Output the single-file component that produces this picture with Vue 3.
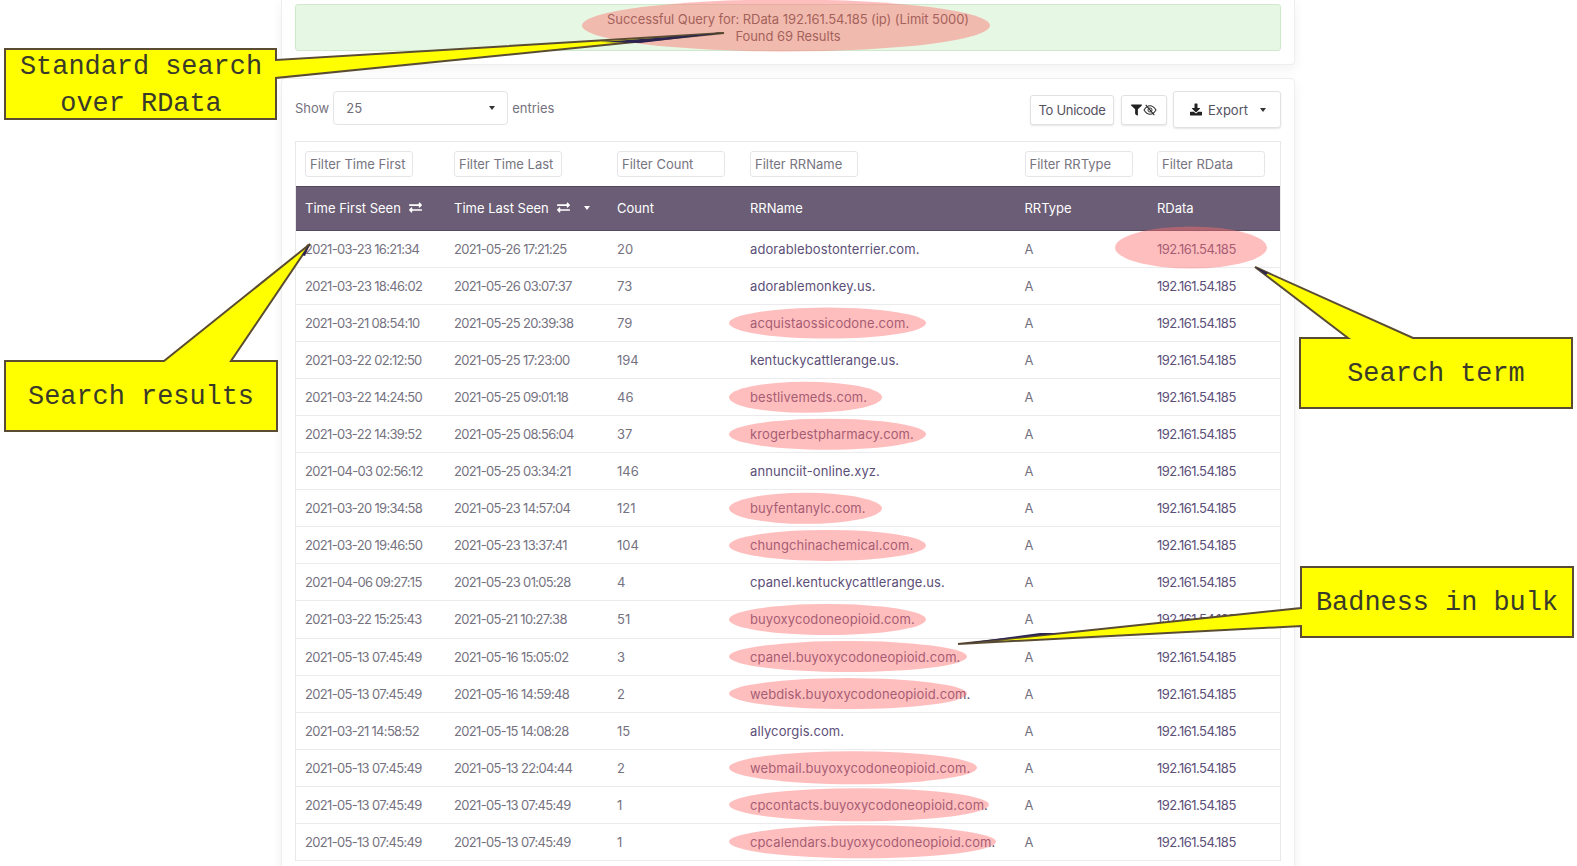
<script setup>
const rowsRaw = [
  ['2021-03-23 16:21:34','2021-05-26 17:21:25','20','adorablebostonterrier.com.'],
  ['2021-03-23 18:46:02','2021-05-26 03:07:37','73','adorablemonkey.us.'],
  ['2021-03-21 08:54:10','2021-05-25 20:39:38','79','acquistaossicodone.com.'],
  ['2021-03-22 02:12:50','2021-05-25 17:23:00','194','kentuckycattlerange.us.'],
  ['2021-03-22 14:24:50','2021-05-25 09:01:18','46','bestlivemeds.com.'],
  ['2021-03-22 14:39:52','2021-05-25 08:56:04','37','krogerbestpharmacy.com.'],
  ['2021-04-03 02:56:12','2021-05-25 03:34:21','146','annunciit-online.xyz.'],
  ['2021-03-20 19:34:58','2021-05-23 14:57:04','121','buyfentanylc.com.'],
  ['2021-03-20 19:46:50','2021-05-23 13:37:41','104','chungchinachemical.com.'],
  ['2021-04-06 09:27:15','2021-05-23 01:05:28','4','cpanel.kentuckycattlerange.us.'],
  ['2021-03-22 15:25:43','2021-05-21 10:27:38','51','buyoxycodoneopioid.com.'],
  ['2021-05-13 07:45:49','2021-05-16 15:05:02','3','cpanel.buyoxycodoneopioid.com.'],
  ['2021-05-13 07:45:49','2021-05-16 14:59:48','2','webdisk.buyoxycodoneopioid.com.'],
  ['2021-03-21 14:58:52','2021-05-15 14:08:28','15','allycorgis.com.'],
  ['2021-05-13 07:45:49','2021-05-13 22:04:44','2','webmail.buyoxycodoneopioid.com.'],
  ['2021-05-13 07:45:49','2021-05-13 07:45:49','1','cpcontacts.buyoxycodoneopioid.com.'],
  ['2021-05-13 07:45:49','2021-05-13 07:45:49','1','cpcalendars.buyoxycodoneopioid.com.']
]
const rows = rowsRaw.map((r, i) => ({ id: i, first: r[0], last: r[1], count: r[2], name: r[3], type: 'A', data: '192.161.54.185' }))

const filters = ['Filter Time First', 'Filter Time Last', 'Filter Count', 'Filter RRName', 'Filter RRType', 'Filter RData']

const marks = [
  { row: 2, x2: 926 }, { row: 4, x2: 882 }, { row: 5, x2: 926 }, { row: 7, x2: 882 },
  { row: 8, x2: 926 }, { row: 10, x2: 926 }, { row: 11, x2: 967 }, { row: 12, x2: 967 },
  { row: 14, x2: 977 }, { row: 15, x2: 989 }, { row: 16, x2: 996 }
].map(m => ({ cx: (729 + m.x2) / 2, rx: (m.x2 - 729) / 2, cy: 249 + 37.05 * m.row, ry: m.row > 13 ? 16.5 : 15.5 }))

const callouts = [
  '5,49 276,49 276,60 724,33 276,78 276,119 5,119',
  '5,361 164,361 310,244 231,361 277,361 277,431 5,431',
  '1300,338 1348,338 1255,267 1413,338 1572,338 1572,408 1300,408',
  '1301,567 1573,567 1573,637 1301,637 1301,626 958,644 1301,608'
]

const exchange = 'M0 168v-16c0-13.255 10.745-24 24-24h360V80c0-21.367 25.899-32.042 40.971-16.971l80 80c9.372 9.373 9.372 24.569 0 33.941l-80 80C409.956 271.982 384 261.456 384 240v-48H24c-13.255 0-24-10.745-24-24zm488 152H128v-48c0-21.314-25.862-32.08-40.971-16.971l-80 80c-9.372 9.373-9.372 24.569 0 33.941l80 80C102.057 463.997 128 453.437 128 432v-48h360c13.255 0 24-10.745 24-24v-16c0-13.255-10.745-24-24-24z'
</script>

<template>
  <div class="page">
    <main class="column">
      <section class="card card-top">
        <div class="alert">
          <div>Successful Query for: RData 192.161.54.185 (ip) (Limit 5000)</div>
          <div>Found 69 Results</div>
        </div>
      </section>

      <section class="card card-main">
        <div class="toolbar">
          <div class="length">
            <span>Show</span>
            <div class="select"><span>25</span><i class="caret dark"></i></div>
            <span>entries</span>
          </div>
          <div class="actions">
            <button class="btn unicode">To Unicode</button>
            <button class="btn toggle">
              <svg class="ic-filter" viewBox="0 0 512 512"><path d="M487.976 0H24.028C2.71 0-8.047 25.866 7.058 40.971L192 225.941V432c0 7.831 3.821 15.17 10.237 19.662l80 55.98C298.02 518.69 320 507.493 320 487.98V225.941l184.947-184.97C520.021 25.896 509.338 0 487.976 0z"/></svg>
              <svg class="ic-eye" viewBox="0 0 16 14"><path d="M1 7 C3.5 3 5.5 2 8 2 C10.5 2 12.5 3 15 7 C12.5 11 10.5 12 8 12 C5.5 12 3.5 11 1 7Z" fill="none" stroke="#2b2b2b" stroke-width="1.2"/><circle cx="8" cy="7" r="2.4" fill="none" stroke="#2b2b2b" stroke-width="1.1"/><path d="M3 1 L13 13" stroke="#2b2b2b" stroke-width="1.3"/></svg>
            </button>
            <button class="btn export">
              <svg class="ic-down" viewBox="0 0 512 512"><path d="M216 0h80c13.3 0 24 10.7 24 24v168h87.7c17.8 0 26.7 21.5 14.1 34.1L269.7 378.3c-7.5 7.5-19.8 7.5-27.3 0L90.1 226.1c-12.6-12.6-3.7-34.1 14.1-34.1H192V24c0-13.3 10.7-24 24-24zm296 376v112c0 13.3-10.7 24-24 24H24c-13.3 0-24-10.7-24-24V376c0-13.3 10.7-24 24-24h146.7l49 49c20.1 20.1 52.5 20.1 72.6 0l49-49H488c13.3 0 24 10.7 24 24z"/></svg>
              <span>Export</span>
              <i class="caret dark"></i>
            </button>
          </div>
        </div>

        <table class="grid">
          <colgroup>
            <col class="c1"><col class="c2"><col class="c3"><col class="c4"><col class="c5"><col class="c6">
          </colgroup>
          <thead>
            <tr class="filter-row">
              <th v-for="f in filters" :key="f"><div class="filter-input">{{ f }}</div></th>
            </tr>
            <tr class="head-row">
              <th><span class="hd">Time First Seen <svg class="ic-swap" viewBox="0 0 512 512"><path :d="exchange"/></svg></span></th>
              <th><span class="hd">Time Last Seen <svg class="ic-swap" viewBox="0 0 512 512"><path :d="exchange"/></svg><i class="caret light"></i></span></th>
              <th>Count</th>
              <th>RRName</th>
              <th>RRType</th>
              <th>RData</th>
            </tr>
          </thead>
          <tbody>
            <tr v-for="r in rows" :key="r.id">
              <td class="stamp">{{ r.first }}</td>
              <td class="stamp">{{ r.last }}</td>
              <td>{{ r.count }}</td>
              <td class="link name">{{ r.name }}</td>
              <td>{{ r.type }}</td>
              <td class="link ip">{{ r.data }}</td>
            </tr>
          </tbody>
        </table>
      </section>
    </main>

    <svg class="annot" viewBox="0 0 1577 866" width="1577" height="866">
      <ellipse cx="786" cy="25.5" rx="204" ry="26" class="mark"/>
      <ellipse cx="1191" cy="247.5" rx="76" ry="21" class="mark"/>
      <ellipse v-for="m in marks" :key="m.cy" :cx="m.cx" :cy="m.cy" :rx="m.rx" :ry="m.ry" class="mark"/>
      <polygon v-for="c in callouts" :key="c" :points="c" class="callout"/>
      <path d="M724 33 L600 42 L640 43Z" fill="#2c2450"/>
      <path d="M310 244 L302 255 L305 256Z" fill="#2c2450"/>
      <path d="M1255 267 L1266 275 L1268 273Z" fill="#2c2450"/>
      <path d="M958 644 L1040 633 L1060 633Z" fill="#2c2450"/>
    </svg>
    <div class="label l1">Standard search<br>over RData</div>
    <div class="label l2">Search results</div>
    <div class="label l3">Search term</div>
    <div class="label l4">Badness in bulk</div>
  </div>
</template>

<style>
html, body { margin: 0; background: #fff; overflow: hidden; }
</style>

<style scoped>
.page {
  position: relative;
  width: 1577px;
  height: 866px;
  overflow: hidden;
  font-family: Inter, "Open Sans", sans-serif;
  font-size: 13px;
  color: #75727f;
  background: #fff;
}
.column {
  width: 1014px;
  margin-left: 281px;
  display: flex;
  flex-direction: column;
  gap: 13px;
}
.card {
  box-sizing: border-box;
  background: #fff;
  border: 1px solid #eeeeee;
  border-radius: 4px;
  box-shadow: 0 4px 12px rgba(34, 41, 47, 0.06);
  padding: 0 13px;
}
.card-top { height: 65px; padding-top: 4px; border-top: 0; border-radius: 0 0 4px 4px; }
.card-main { padding-top: 12px; min-height: 820px; }
.alert {
  box-sizing: border-box;
  height: 47px;
  background: #e6f8e4;
  border: 1px solid #cfe8cc;
  border-radius: 3px;
  text-align: center;
  line-height: 17px;
  padding-top: 6px;
  color: #57574a;
  letter-spacing: -0.07px;
}
.toolbar {
  height: 37px;
  display: flex;
  justify-content: space-between;
  align-items: center;
  margin-bottom: 13px;
}
.length { display: flex; align-items: center; gap: 4px; padding-bottom: 3px; }
.select {
  box-sizing: border-box;
  width: 175px;
  height: 34px;
  border: 1px solid #e4e4e6;
  border-radius: 4px;
  display: flex;
  align-items: center;
  justify-content: space-between;
  padding: 0 12px;
  color: #6e6b7b;
}
.caret {
  display: inline-block;
  width: 0;
  height: 0;
  border-left: 3.5px solid transparent;
  border-right: 3.5px solid transparent;
  border-top: 4px solid #333;
}
.caret.light { border-top-color: #fff; margin-left: 14px; }
.actions { display: flex; align-items: center; gap: 6.5px; }
.btn {
  box-sizing: border-box;
  background: #fff;
  border: 1px solid #e2e2e4;
  border-radius: 3px;
  box-shadow: 0 1px 2px rgba(0, 0, 0, 0.1);
  font: inherit;
  color: #55525f;
  display: flex;
  align-items: center;
  padding: 0;
}
.unicode { width: 84px; height: 30px; justify-content: center; letter-spacing: -0.3px; }
.toggle { width: 46px; height: 30px; justify-content: center; gap: 1px; }
.export { width: 108px; height: 37px; padding-left: 16px; }
.export span { margin-left: 6px; }
.export .caret { margin-left: 12px; }
.ic-filter { width: 11px; height: 12px; fill: #222; }
.ic-eye { width: 14px; height: 12px; }
.ic-down { width: 12px; height: 13px; fill: #222; }
.ic-swap { width: 13px; height: 13px; fill: #fff; margin-left: 8px; vertical-align: -2px; }
.grid {
  width: 986px;
  table-layout: fixed;
  border-collapse: separate;
  border-spacing: 0;
  border-left: 1px solid #e8e8e8;
  border-right: 1px solid #e8e8e8;
}
.c1 { width: 149px; } .c2 { width: 163px; } .c3 { width: 133px; }
.c4 { width: 274.5px; } .c5 { width: 132.5px; } .c6 { width: 132px; }
.filter-row th {
  height: 45px;
  box-sizing: border-box;
  padding: 0 0 0 9px;
  border-top: 1px solid #e8e8e8;
  text-align: left;
  font-weight: 400;
}
.filter-input {
  box-sizing: border-box;
  width: 108px;
  height: 26px;
  line-height: 24px;
  border: 1px solid #e6e6e8;
  border-radius: 3px;
  padding-left: 4px;
  color: #77747f;
  white-space: nowrap;
  overflow: hidden;
}
.head-row th {
  height: 45px;
  box-sizing: border-box;
  padding: 0 0 2px 9px;
  background: #6a5d75;
  color: #fff;
  text-align: left;
  font-weight: 400;
  white-space: nowrap;
  border-top: 1px solid #544a60;
  border-bottom: 1px solid #544a60;
}
.hd { display: inline-flex; align-items: center; }
td {
  height: 37.05px;
  box-sizing: border-box;
  padding: 0 0 0 9px;
  border-bottom: 1px solid #ebebee;
  white-space: nowrap;
  overflow: hidden;
}
td.link { color: #5c4f78; }
td.stamp { letter-spacing: -0.68px; }
td.name { letter-spacing: 0.1px; }
td.ip { letter-spacing: -0.5px; }
.annot { position: absolute; left: 0; top: 0; pointer-events: none; }
.mark { fill: rgba(255, 110, 110, 0.45); }
.callout { fill: #ffff00; stroke: #5a4c32; stroke-width: 2; }
.label {
  position: absolute;
  width: 272px;
  font-family: "Liberation Mono", "DejaVu Sans Mono", monospace;
  font-size: 26.9px;
  line-height: 37px;
  color: #3a3a2a;
  text-align: center;
}
.l1 { left: 5px; top: 48.5px; }
.l2 { left: 5px; top: 379px; }
.l3 { left: 1300px; top: 356px; }
.l4 { left: 1301px; top: 585px; }
</style>
